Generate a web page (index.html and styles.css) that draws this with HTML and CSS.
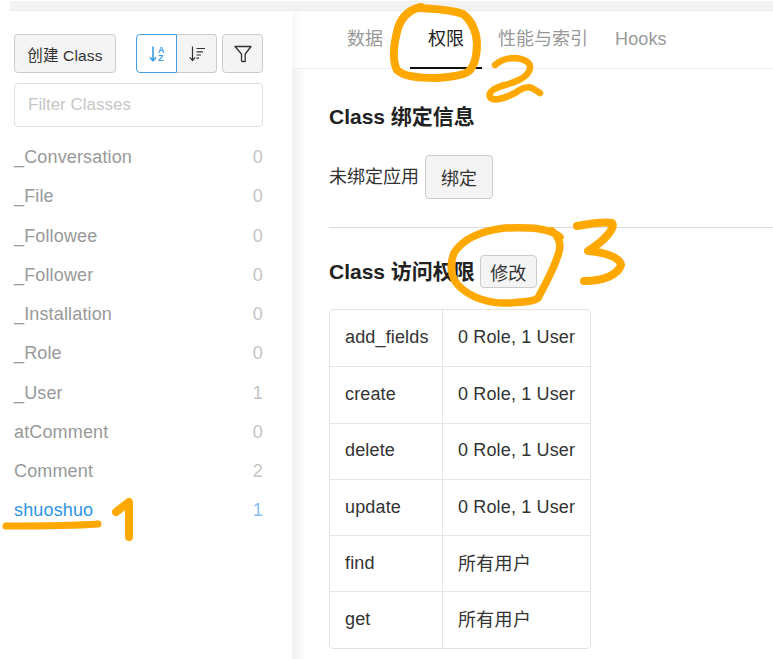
FILE: index.html
```html
<!DOCTYPE html>
<html lang="zh">
<head>
<meta charset="utf-8">
<title>Class 权限</title>
<link rel="stylesheet" href="styles.css">
</head>
<body>
<div class="page">
  <div class="topstrip"></div>
  <div class="app">
    <aside class="sidebar">
      <div class="toolbar">
        <button class="btn create">创建 Class</button>
        <div class="sortgroup">
          <button class="btn sort active" aria-label="按名称排序">
            <svg width="18" height="18" viewBox="0 0 18 18"><path d="M5 1.500v14M2 12.400 5 15.800l3-3.400" fill="none" stroke="currentColor" stroke-width="1.600"/><text x="10" y="7.500" class="az">A</text><text x="10" y="16" class="az">Z</text></svg>
          </button>
          <button class="btn sort" aria-label="按数量排序">
            <svg width="18" height="18" viewBox="0 0 18 18"><path d="M4.500 1.500v14M1.800 12.400l2.700 3.200 2.700-3.200M8.500 3.500h8.500M8.500 6.800h6.500M8.500 10h4.500M8.500 13.200h2.500" fill="none" stroke="currentColor" stroke-width="1.200"/></svg>
          </button>
        </div>
        <button class="btn filter" aria-label="筛选">
          <svg width="18" height="18" viewBox="0 0 18 18"><path d="M1 1.500h16L11.200 9v7.500H8.500c-.8 0-1-.5-1-1V9z" fill="none" stroke="currentColor" stroke-width="1.300" stroke-linejoin="round"/></svg>
        </button>
      </div>
      <input class="search" placeholder="Filter Classes">
      <ul class="classes">
        <li><span>_Conversation</span><span class="num">0</span></li>
        <li><span>_File</span><span class="num">0</span></li>
        <li><span>_Followee</span><span class="num">0</span></li>
        <li><span>_Follower</span><span class="num">0</span></li>
        <li><span>_Installation</span><span class="num">0</span></li>
        <li><span>_Role</span><span class="num">0</span></li>
        <li><span>_User</span><span class="num">1</span></li>
        <li><span>atComment</span><span class="num">0</span></li>
        <li><span>Comment</span><span class="num">2</span></li>
        <li class="current"><span>shuoshuo</span><span class="num">1</span></li>
      </ul>
    </aside>
    <main class="main">
      <nav class="tabs">
        <a class="tab">数据</a>
        <a class="tab on">权限</a>
        <a class="tab">性能与索引</a>
        <a class="tab">Hooks</a>
      </nav>
      <section class="bind">
        <h2>Class 绑定信息</h2>
        <div class="bindrow"><span class="bindtext">未绑定应用</span><button class="btn bindbtn">绑定</button></div>
      </section>
      <section class="access">
        <div class="accesshead"><h2>Class 访问权限</h2><button class="btn edit">修改</button></div>
        <table class="perms">
          <tr><td>add_fields</td><td>0 Role, 1 User</td></tr>
          <tr><td>create</td><td>0 Role, 1 User</td></tr>
          <tr><td>delete</td><td>0 Role, 1 User</td></tr>
          <tr><td>update</td><td>0 Role, 1 User</td></tr>
          <tr><td>find</td><td class="cjk">所有用户</td></tr>
          <tr><td>get</td><td class="cjk">所有用户</td></tr>
        </table>
      </section>
    </main>
  </div>
  <svg class="marks" width="773" height="659" viewBox="0 0 773 659">
    <g fill="none" stroke="#ffa800" stroke-linecap="round" stroke-linejoin="round">
      <path stroke-width="7" d="M6 526C30 526 70 526 98 524"/>
      <path stroke-width="8" d="M116 512 129 502 129 537"/>
      <path stroke-width="8" d="M421 7C408 10 400 18 397 32 393 48 393 62 397 70 404 77 420 78 436 78 452 77 466 75 470 70 477 62 478 45 476 35 473 25 470 19 463 14 450 9 435 9 420 8"/>
      <path stroke-width="6.500" d="M495 65C502 59 508 58 515 58 525 59 531 63 530 68 529 75 520 81 505 85 494 88 488 92 490 97 493 102 505 98 515 93 522 88 528 86 532 88L540 93"/>
      <path stroke-width="7.500" d="M560 237C550 228 530 227 505 228 480 231 462 240 454 253 449 265 451 277 458 285 470 298 490 304 510 303 525 302 535 301 538 298 545 285 553 270 557 258 561 248 562 240 552 231"/>
      <path stroke-width="8" d="M577 226C590 224 602 221 612 223 616 228 603 242 588 251 603 252 620 257 621 265 618 275 603 281 584 281"/>
    </g>
  </svg>
</div>
</body>
</html>
```
FILE: styles.css
```css
* { box-sizing: border-box; }
html, body { margin: 0; padding: 0; background: #fff; }
body {
  font-family: "Liberation Sans", "Noto Sans CJK SC", sans-serif;
  color: #333;
  letter-spacing: 0.15px;
  overflow: hidden;
}
.page { position: relative; width: 773px; height: 659px; overflow: hidden; }
.topstrip {
  height: 11px;
  margin-left: 10px;
  background: #f3f3f3;
  border-bottom: 1px solid #e9e9e9;
  border-top: 1px solid #fff;
}
.app { display: flex; height: 648px; }
.sidebar {
  width: 292px;
  flex: none;
  padding: 23px 29px 0 14px;
}
.toolbar { display: flex; align-items: stretch; height: 39px; }
.btn {
  font-family: inherit;
  letter-spacing: inherit;
  color: #333;
  background: #f4f4f4;
  border: 1px solid #ccc;
  border-radius: 4px;
  padding: 0;
  display: flex;
  align-items: center;
  justify-content: center;
}
.create { width: 102px; font-size: 15.500px; }
.sortgroup { display: flex; margin-left: 20px; }
.sort { width: 41px; }
.sort.active {
  background: #fff;
  color: #3d9fe8;
  border-color: #3d9fe8;
  border-radius: 4px 0 0 4px;
}
.sort:not(.active) { width: 40px; border-left: 0; border-radius: 0 4px 4px 0; }
.filter { width: 41px; margin-left: 5px; }
.az { font: bold 9px "Liberation Sans", sans-serif; fill: currentColor; }
.search {
  display: block;
  width: 249px;
  height: 44px;
  margin-top: 10px;
  padding: 0 13px;
  border: 1px solid #e0e0e0;
  border-radius: 4px;
  font: 17px "Liberation Sans", sans-serif;
  outline: none;
}
.search::placeholder { color: #c6c6c6; opacity: 1; }
.classes { list-style: none; margin: 11px 0 0; padding: 0; }
.classes li {
  display: flex;
  justify-content: space-between;
  height: 39.250px;
  line-height: 39.250px;
  font-size: 18px;
  color: #999;
}
.classes .num { color: #c4c4c4; }
.classes .current { color: #2f94e4; }
.classes .current .num { color: #84c0f2; }
.main {
  flex: 1;
  min-width: 0;
  background: linear-gradient(to right, #f1f1f1 0, #f5f5f5 6px, #fff 13px);
  position: relative;
}
.tabs {
  display: flex;
  height: 58px;
  border-bottom: 1px solid #eee;
  background: linear-gradient(to right, #f8f8f8 0, #fff 10px);
}
.tab {
  font-size: 18px;
  letter-spacing: 0;
  line-height: 57px;
  color: #999;
  height: 58px;
}
.tab:nth-child(1) { margin-left: 55px; }
.tab:nth-child(2) { margin-left: 27px; padding: 0 18px; }
.tab:nth-child(3) { margin-left: 16px; }
.tab:nth-child(4) { margin-left: 27px; letter-spacing: 0.15px; }
.tab.on { color: #222; border-bottom: 2px solid #111; }
.bind { padding: 0 0 28px 37px; }
h2 { margin: 0; font-size: 21px; letter-spacing: 0; line-height: 28px; font-weight: bold; color: #222; }
.bind h2 { margin-top: 34px; }
.bindrow { display: flex; align-items: center; margin-top: 24px; font-size: 18px; letter-spacing: 0; }
.bindtext { margin-bottom: 4px; }
.bindbtn { width: 68px; height: 44px; margin-left: 6px; font-size: 18px; }
.access { margin-left: 37px; padding-top: 27px; border-top: 1px solid #ddd; }
.accesshead { display: flex; align-items: center; height: 33px; }
.edit { width: 57px; height: 33px; margin-left: 5px; font-size: 18px; }
.perms {
  margin-top: 21px;
  border-collapse: separate;
  border-spacing: 0;
  border: 1px solid #e2e2e2;
  border-radius: 4px;
  font-size: 18px;
  width: 262px;
  table-layout: fixed;
}
.perms td { height: 56.300px; padding: 0 15px 1px; border-top: 1px solid #e6e6e6; white-space: nowrap; }
.perms tr:first-child td { border-top: 0; }
.perms td:first-child { width: 113px; border-right: 1px solid #e6e6e6; }
.perms .cjk { letter-spacing: 0.3px; padding-bottom: 4px; }
.marks { position: absolute; left: 0; top: 0; pointer-events: none; }
```
